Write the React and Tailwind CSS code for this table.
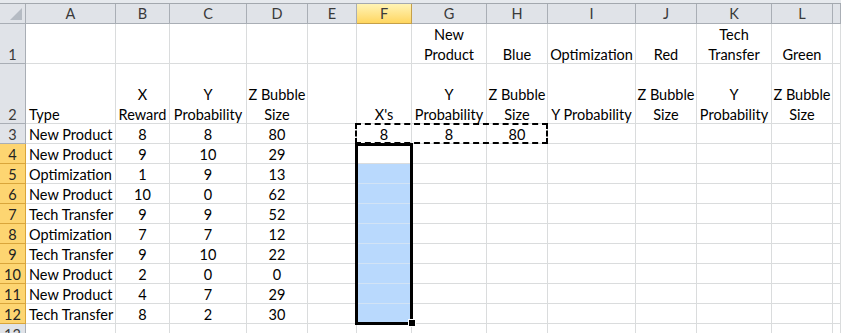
import React from 'react';

// Column letters shown across the top of the sheet (M is only a sliver)
const COLS = ['A', 'B', 'C', 'D', 'E', 'F', 'G', 'H', 'I', 'J', 'K', 'L', 'M'];

// Worksheet contents, keyed by row number; each cell is a list of lines
const SHEET = {
  1: {
    G: ['New', 'Product'],
    H: ['Blue'],
    I: ['Optimization'],
    J: ['Red'],
    K: ['Tech', 'Transfer'],
    L: ['Green'],
  },
  2: {
    A: ['Type'],
    B: ['X', 'Reward'],
    C: ['Y', 'Probability'],
    D: ['Z Bubble', 'Size'],
    F: ["X's"],
    G: ['Y', 'Probability'],
    H: ['Z Bubble', 'Size'],
    I: ['Y Probability'],
    J: ['Z Bubble', 'Size'],
    K: ['Y', 'Probability'],
    L: ['Z Bubble', 'Size'],
  },
};

const records = [
  ['New Product', 8, 8, 80],
  ['New Product', 9, 10, 29],
  ['Optimization', 1, 9, 13],
  ['New Product', 10, 0, 62],
  ['Tech Transfer', 9, 9, 52],
  ['Optimization', 7, 7, 12],
  ['Tech Transfer', 9, 10, 22],
  ['New Product', 2, 0, 0],
  ['New Product', 4, 7, 29],
  ['Tech Transfer', 8, 2, 30],
];

records.forEach((r, i) => {
  SHEET[i + 3] = { A: [r[0]], B: [String(r[1])], C: [String(r[2])], D: [String(r[3])] };
});
SHEET[3].F = ['8'];
SHEET[3].G = ['8'];
SHEET[3].H = ['80'];

const ROW_NUMS = Array.from({ length: 13 }, (_, i) => i + 1);
const SELECTED_ROWS = [4, 5, 6, 7, 8, 9, 10, 11, 12];

const rowHeight = (n) => (n === 1 ? 'h-[40px]' : n === 2 ? 'h-[60px]' : 'h-[20px]');

function ColumnHeader({ letter }) {
  const active = letter === 'F';
  return (
    <div
      className={
        active
          ? 'h-[20px] flex items-center justify-center border-r border-b border-[#c5a04a] bg-gradient-to-b from-[#fff3b4] to-[#ffd65e] text-[#3a3a3a]'
          : 'h-[20px] flex items-center justify-center border-r border-b border-[#a9aeb5] bg-[#e0e3e8] text-[#3a3a3a]'
      }
    >
      {letter === 'M' ? null : letter}
    </div>
  );
}

function RowHeader({ n }) {
  const active = SELECTED_ROWS.includes(n);
  return (
    <div
      className={
        (active
          ? 'border-[#d9a53a] bg-[#fdd571] text-[#222] '
          : 'border-[#a9aeb5] bg-[#e0e3e8] text-[#3a3a3a] ') +
        rowHeight(n) +
        ' border-r border-b flex flex-col justify-end items-center leading-[20px]'
      }
    >
      <span className="translate-y-[2px]">{n}</span>
    </div>
  );
}

function Cell({ row, col }) {
  const lines = SHEET[row]?.[col] || [];
  const filled = col === 'F' && row >= 5 && row <= 12;
  return (
    <div
      className={
        rowHeight(row) +
        ' border-r border-b flex flex-col justify-end whitespace-nowrap leading-[20px] text-black ' +
        (col === 'A' ? 'items-start pl-[3px] ' : 'items-center ') +
        (filled ? 'bg-[#b9d9fd] border-[#d2e3f5]' : 'bg-white border-[#dadcdd]')
      }
    >
      {lines.map((l, i) => (
        <span key={i} className="translate-y-[2px]">
          {l}
        </span>
      ))}
    </div>
  );
}

export default function App() {
  return (
    <div
      className="w-[841px] h-[333px] overflow-hidden bg-white text-[14.5px]"
      style={{ fontFamily: 'Lato, "Open Sans", sans-serif' }}
    >
      <div className="h-[4px] bg-[#e6e9ed] border-b border-[#a3a8ae]" />
      <div className="relative">
        <div className="grid grid-cols-[26px_90px_54px_77px_61px_49px_55px_75px_61px_88px_61px_75px_61px_1fr]">
          {/* corner select-all button */}
          <div className="h-[20px] border-r border-b border-[#a9aeb5] bg-[#e0e3e8] relative">
            <svg className="absolute left-[10px] top-[4px]" width="12" height="12" viewBox="0 0 12 12">
              <polygon points="12,0 12,12 0,12" fill="#b5bbc3" />
            </svg>
          </div>
          {COLS.map((c) => (
            <ColumnHeader key={c} letter={c} />
          ))}
          {ROW_NUMS.map((n) => (
            <React.Fragment key={n}>
              <RowHeader n={n} />
              {COLS.map((c) => (
                <Cell key={c} row={n} col={c} />
              ))}
            </React.Fragment>
          ))}
        </div>

        {/* copy marquee around F3:H3 */}
        <div className="absolute left-[355px] top-[119px] w-[193px] h-[21px] border-2 border-dashed border-black pointer-events-none" />

        {/* selected range F4:F12 */}
        <div className="absolute left-[355px] top-[139px] w-[58px] h-[182px] border-[3px] border-black pointer-events-none" />
        {/* fill handle */}
        <div className="absolute left-[409px] top-[316px] w-[6px] h-[6px] bg-black outline outline-1 outline-white pointer-events-none" />
      </div>
    </div>
  );
}
